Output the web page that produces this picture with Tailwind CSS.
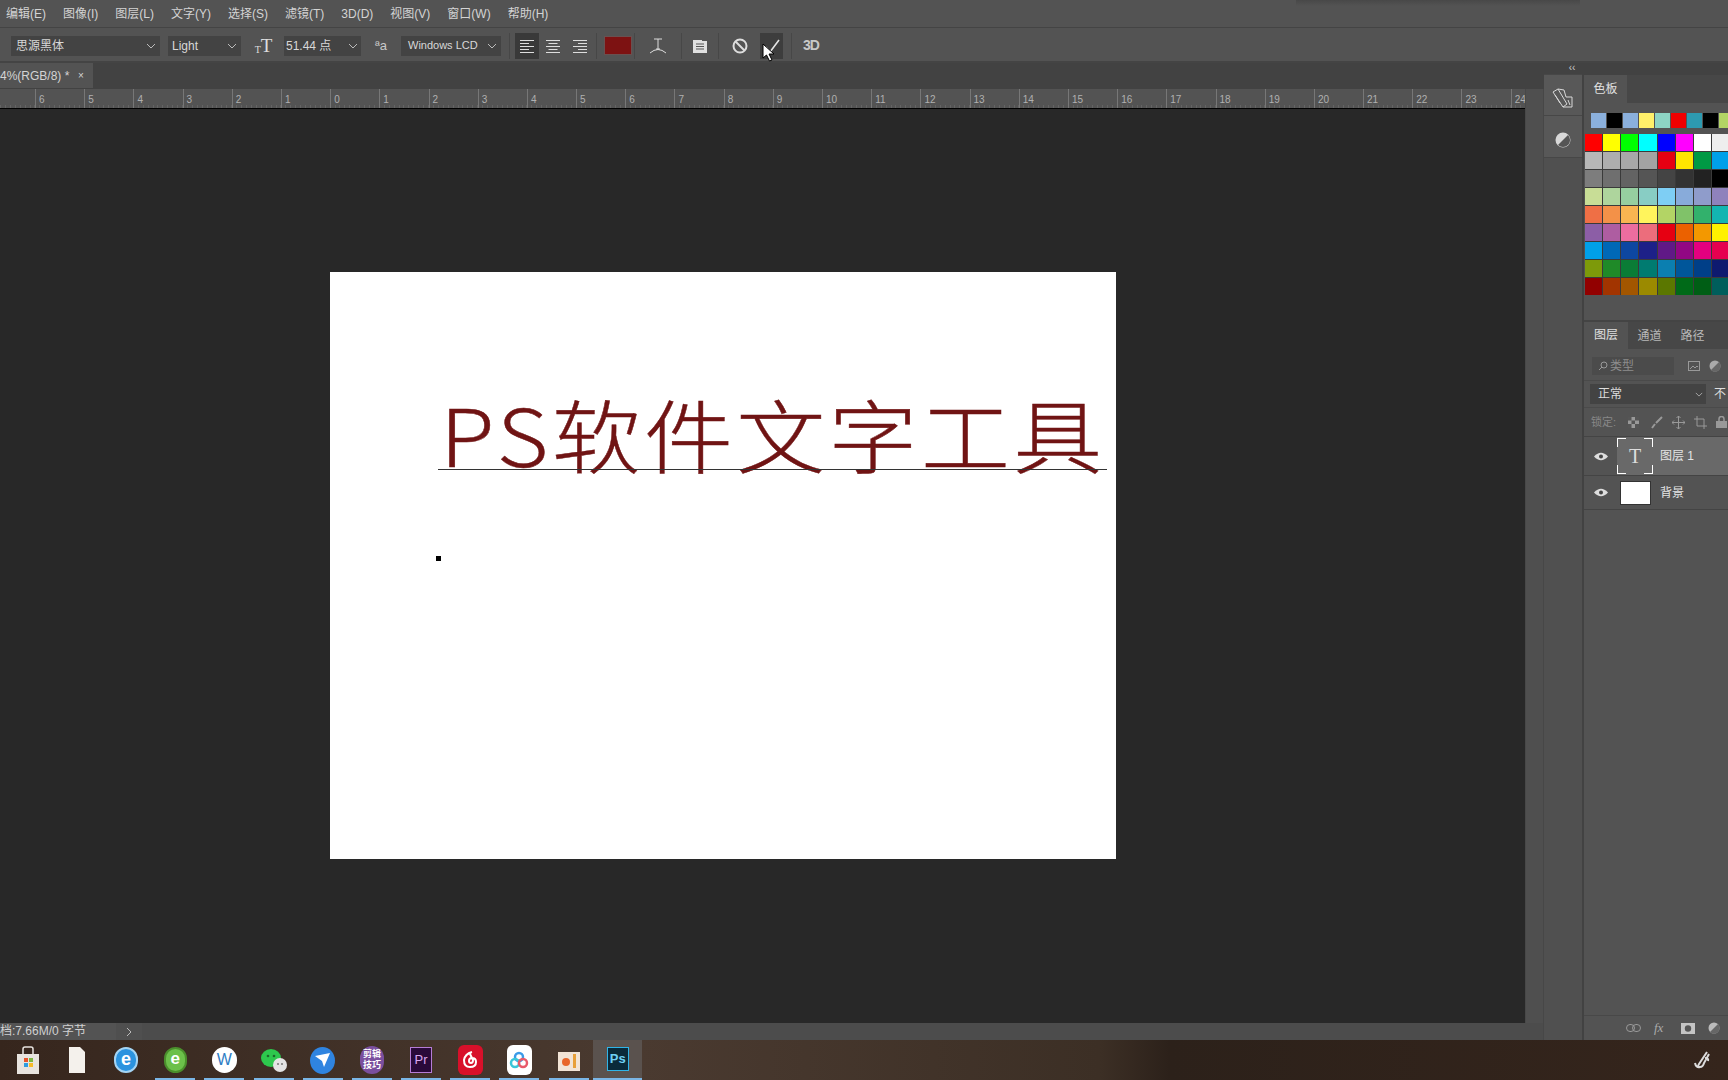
<!DOCTYPE html>
<html lang="zh">
<head>
    <meta charset="UTF-8">
    <title>Photoshop</title>
    <script src="https://cdn.jsdelivr.net/npm/@tailwindcss/browser@4"></script>
</head>
<body class="relative w-[1728px] h-[1080px] overflow-hidden flex flex-col bg-[#282828] text-[#d8d8d8] font-['Liberation_Sans','Noto_Sans_CJK_SC',sans-serif]">

    <!-- menu bar -->
    <div class="h-[28px] shrink-0 bg-[#535353] border-b border-[#444] flex items-center pl-[6px] gap-[17px] text-[12px] text-[#d4d4d4]">
        <span>编辑(E)</span><span>图像(I)</span><span>图层(L)</span><span>文字(Y)</span><span>选择(S)</span><span>滤镜(T)</span><span>3D(D)</span><span>视图(V)</span><span>窗口(W)</span><span>帮助(H)</span>
    </div>

    <!-- options bar -->
    <div class="h-[35px] shrink-0 bg-[#535353] border-b-2 border-[#444] flex items-center pt-[2px] pl-[11px] text-[12px]">
        <div class="w-[149px] h-[20px] bg-[#434343] flex items-center justify-between pl-[5px] pr-[4px]"><span>思源黑体</span><svg class="w-[10px] h-[6px]" viewBox="0 0 10 6" fill="none" stroke="#bbb"><path d="M1 1l4 4 4-4"/></svg></div>
        <div class="w-[73px] h-[20px] ml-[8px] bg-[#434343] flex items-center justify-between pl-[4px] pr-[4px]"><span>Light</span><svg class="w-[10px] h-[6px]" viewBox="0 0 10 6" fill="none" stroke="#bbb"><path d="M1 1l4 4 4-4"/></svg></div>
        <div class="w-[43px] pl-[2px] flex justify-center font-['Liberation_Serif',serif] text-[#ddd] leading-none"><span class="text-[10px] self-end">T</span><span class="text-[19px]">T</span></div>
        <div class="w-[77px] h-[20px] bg-[#434343] flex items-center justify-between pl-[2px] pr-[3px]"><span>51.44 点</span><svg class="w-[10px] h-[6px]" viewBox="0 0 10 6" fill="none" stroke="#bbb"><path d="M1 1l4 4 4-4"/></svg></div>
        <div class="w-[40px] text-center text-[13px] text-[#c8c8c8]">ªa</div>
        <div class="w-[100px] h-[20px] bg-[#434343] flex items-center justify-between pl-[7px] pr-[4px] text-[11px]"><span>Windows LCD</span><svg class="w-[10px] h-[6px]" viewBox="0 0 10 6" fill="none" stroke="#bbb"><path d="M1 1l4 4 4-4"/></svg></div>
        <div class="w-px h-[26px] bg-[#474747] ml-[8px] mr-[5px]"></div>
        <div class="w-[24px] h-[26px] bg-[#393939] flex items-center justify-center">
            <svg class="w-[14px] h-[14px]" viewBox="0 0 14 14" stroke="#ddd"><path d="M0 1.5h14M0 4.5h9M0 7.5h14M0 10.5h9M0 13.5h14"/></svg>
        </div>
        <div class="w-[28px] flex justify-center">
            <svg class="w-[14px] h-[14px]" viewBox="0 0 14 14" stroke="#ddd"><path d="M0 1.5h14M2.5 4.5h9M0 7.5h14M2.5 10.5h9M0 13.5h14"/></svg>
        </div>
        <div class="w-[26px] flex justify-center">
            <svg class="w-[14px] h-[14px]" viewBox="0 0 14 14" stroke="#ddd"><path d="M0 1.5h14M5 4.5h9M0 7.5h14M5 10.5h9M0 13.5h14"/></svg>
        </div>
        <div class="w-px h-[26px] bg-[#474747] ml-[3px] mr-[7px]"></div>
        <div class="w-[28px] h-[19px] bg-[#7d1212] border border-[#6a5050]"></div>
        <div class="w-px h-[26px] bg-[#474747] ml-[2px]"></div>
        <div class="w-[46px] flex justify-center">
            <svg class="w-[18px] h-[18px]" viewBox="0 0 18 18" fill="none" stroke="#ddd"><path d="M5 2h8M9 2v10M7 12h4M1 16q8-7 16 0"/></svg>
        </div>
        <div class="w-px h-[26px] bg-[#474747]"></div>
        <div class="w-[36px] flex justify-center">
            <svg class="w-[16px] h-[16px]" viewBox="0 0 16 16"><path d="M1 2h9v1h5v12H1z" fill="#e0e0e0"/><path d="M4 6h8M4 8.5h8M4 11h8" stroke="#555"/></svg>
        </div>
        <div class="w-px h-[26px] bg-[#474747]"></div>
        <div class="w-[41px] flex justify-center">
            <svg class="w-[16px] h-[16px]" viewBox="0 0 16 16" fill="none" stroke="#ddd" stroke-width="2"><circle cx="8" cy="8" r="6.5"/><path d="M3.5 3.5l9 9"/></svg>
        </div>
        <div class="w-[23px] h-[26px] bg-[#3d3d3d] flex items-center justify-center">
            <svg class="w-[16px] h-[14px]" viewBox="0 0 16 14" fill="none" stroke="#e4e4e4" stroke-width="1.6"><path d="M2 8l4 5L15 1"/></svg>
        </div>
        <div class="w-px h-[26px] bg-[#474747] ml-[8px]"></div>
        <div class="w-[38px] text-center text-[14px] font-bold text-[#c8c8c8] tracking-[-1px]">3D</div>
    </div>

    <!-- tab bar -->
    <div class="h-[26px] shrink-0 bg-[#424242] flex">
        <div class="w-[93px] h-[25px] bg-[#535353] flex items-center gap-[6px] text-[12px] text-[#d4d4d4]"><span class="w-[72px] whitespace-nowrap">4%(RGB/8) *</span><span class="text-[10px]">×</span></div>
    </div>

    <div class="flex flex-1 min-h-0">
        <!-- document area -->
        <div class="w-[1543px] shrink-0 flex flex-col">
            <div class="flex flex-1 min-h-0">
                <div class="w-[1525px] shrink-0 flex flex-col">
                    <!-- ruler -->
                    <div class="h-[20px] shrink-0 bg-[#535353] border-b border-black flex overflow-hidden pl-[35px] text-[10px] leading-[22px] text-[#b0b0b0] bg-[repeating-linear-gradient(90deg,#636363_0,#636363_1px,transparent_1px,transparent_4.92px)] bg-bottom bg-no-repeat bg-size-[100%_3px]">
                        <span class="w-[49.2px] shrink-0 pl-[3px] border-l border-[#777]">6</span><span class="w-[49.2px] shrink-0 pl-[3px] border-l border-[#777]">5</span><span class="w-[49.2px] shrink-0 pl-[3px] border-l border-[#777]">4</span><span class="w-[49.2px] shrink-0 pl-[3px] border-l border-[#777]">3</span><span class="w-[49.2px] shrink-0 pl-[3px] border-l border-[#777]">2</span><span class="w-[49.2px] shrink-0 pl-[3px] border-l border-[#777]">1</span><span class="w-[49.2px] shrink-0 pl-[3px] border-l border-[#777]">0</span><span class="w-[49.2px] shrink-0 pl-[3px] border-l border-[#777]">1</span><span class="w-[49.2px] shrink-0 pl-[3px] border-l border-[#777]">2</span><span class="w-[49.2px] shrink-0 pl-[3px] border-l border-[#777]">3</span><span class="w-[49.2px] shrink-0 pl-[3px] border-l border-[#777]">4</span><span class="w-[49.2px] shrink-0 pl-[3px] border-l border-[#777]">5</span><span class="w-[49.2px] shrink-0 pl-[3px] border-l border-[#777]">6</span><span class="w-[49.2px] shrink-0 pl-[3px] border-l border-[#777]">7</span><span class="w-[49.2px] shrink-0 pl-[3px] border-l border-[#777]">8</span><span class="w-[49.2px] shrink-0 pl-[3px] border-l border-[#777]">9</span><span class="w-[49.2px] shrink-0 pl-[3px] border-l border-[#777]">10</span><span class="w-[49.2px] shrink-0 pl-[3px] border-l border-[#777]">11</span><span class="w-[49.2px] shrink-0 pl-[3px] border-l border-[#777]">12</span><span class="w-[49.2px] shrink-0 pl-[3px] border-l border-[#777]">13</span><span class="w-[49.2px] shrink-0 pl-[3px] border-l border-[#777]">14</span><span class="w-[49.2px] shrink-0 pl-[3px] border-l border-[#777]">15</span><span class="w-[49.2px] shrink-0 pl-[3px] border-l border-[#777]">16</span><span class="w-[49.2px] shrink-0 pl-[3px] border-l border-[#777]">17</span><span class="w-[49.2px] shrink-0 pl-[3px] border-l border-[#777]">18</span><span class="w-[49.2px] shrink-0 pl-[3px] border-l border-[#777]">19</span><span class="w-[49.2px] shrink-0 pl-[3px] border-l border-[#777]">20</span><span class="w-[49.2px] shrink-0 pl-[3px] border-l border-[#777]">21</span><span class="w-[49.2px] shrink-0 pl-[3px] border-l border-[#777]">22</span><span class="w-[49.2px] shrink-0 pl-[3px] border-l border-[#777]">23</span><span class="w-[49.2px] shrink-0 pl-[3px] border-l border-[#777]">24</span>
                    </div>
                    <!-- canvas -->
                    <div class="flex-1 bg-[#282828] pl-[330px] pt-[163px]">
                        <div class="relative w-[786px] h-[587px] bg-white overflow-hidden">
                            <div class="absolute left-[110px] top-[95px] whitespace-nowrap text-[89px] leading-[124px] tracking-[3.3px] font-light text-[#701414] font-['Noto_Sans_CJK_SC','Noto_Sans',sans-serif] origin-[0_99px] scale-y-[0.89] [-webkit-text-stroke:0.5px_#701414]">PS软件文字工具</div>
                            <div class="absolute left-[108px] top-[197px] w-[669px] h-px bg-[#333]"></div>
                            <div class="absolute left-[106px] top-[284px] w-[5px] h-[5px] bg-black"></div>
                        </div>
                    </div>
                </div>
                <!-- vertical scrollbar -->
                <div class="w-[18px] shrink-0 bg-[#4f4f4f] border-l border-[#484848]"></div>
            </div>
            <!-- status bar -->
            <div class="h-[17px] shrink-0 bg-[#4c4c4c] flex items-center text-[12px] text-[#d0d0d0]">
                <div class="w-[116px] h-full bg-[#535353] leading-[17px] whitespace-nowrap">档:7.66M/0 字节</div>
                <div class="w-[26px] h-full bg-[#4f4f4f] flex items-center justify-center">
                    <svg class="w-[6px] h-[10px]" viewBox="0 0 6 10" fill="none" stroke="#bbb"><path d="M1 1l4 4-4 4"/></svg>
                </div>
            </div>
        </div>

        <!-- collapsed dock -->
        <div class="w-[41px] shrink-0 bg-[#505050] border-l border-[#474747] border-r-2 border-r-[#424242] relative">
            <div class="h-[12px] text-center text-[10px] leading-[12px] text-[#ccc] absolute left-[20px] top-[-27px] w-[16px]">‹‹</div>
            <div class="h-[42px] mt-[-15px] pt-[6px] bg-[#585858] border-y border-[#474747] flex items-center justify-center">
                <svg class="w-[22px] h-[22px]" viewBox="0 0 22 22" fill="none" stroke="#d8d8d8"><path d="M1 5l5-3 9 15-4 3zM6 2l6 1 2 7M14 10h6v10h-9M3 8l5 8M16 13l2 5"/></svg>
            </div>
            <div class="h-[42px] pt-[7px] bg-[#585858] border-b border-[#474747] flex items-center justify-center">
                <svg class="w-[16px] h-[16px]" viewBox="0 0 16 16"><circle cx="8" cy="8" r="7.5" fill="#d8d8d8"/><path d="M13 3a7 7 0 0 1-10 10z" fill="#555"/></svg>
            </div>
        </div>

        <!-- right panels -->
        <div class="flex-1 flex flex-col bg-[#535353] overflow-hidden -mt-[14px]">
            <!-- swatches -->
            <div class="h-[247px] shrink-0 bg-[#535353] border-b-2 border-[#444] flex flex-col">
                <div class="h-[28px] shrink-0 bg-[#474747] flex">
                    <div class="w-[43px] bg-[#535353] text-center text-[12px] leading-[28px] text-[#e0e0e0]">色板</div>
                </div>
                <div class="h-[15px] mt-[10px] ml-[7px] flex gap-px overflow-hidden shrink-0">
                    <div class="w-[15px] shrink-0 bg-[#8bb0dc]"></div><div class="w-[15px] shrink-0 bg-black"></div><div class="w-[15px] shrink-0 bg-[#8bb0dc]"></div><div class="w-[15px] shrink-0 bg-[#fff06a]"></div><div class="w-[15px] shrink-0 bg-[#8dd4c4]"></div><div class="w-[15px] shrink-0 bg-[#f00000]"></div><div class="w-[15px] shrink-0 bg-[#2d9ab0]"></div><div class="w-[15px] shrink-0 bg-black"></div><div class="w-[15px] shrink-0 bg-[#b3d465]"></div>
                </div>
                <div class="grid grid-cols-8 gap-px bg-[#3a3a3a] w-[144px] ml-px mt-[6px] shrink-0">
                    <div class="h-[17px] bg-[#ff0000]"></div><div class="h-[17px] bg-[#ffff00]"></div><div class="h-[17px] bg-[#00ff00]"></div><div class="h-[17px] bg-[#00ffff]"></div><div class="h-[17px] bg-[#0000ff]"></div><div class="h-[17px] bg-[#ff00ff]"></div><div class="h-[17px] bg-[#ffffff]"></div><div class="h-[17px] bg-[#eeeeee]"></div>
                    <div class="h-[17px] bg-[#b7b7b7]"></div><div class="h-[17px] bg-[#aeaeae]"></div><div class="h-[17px] bg-[#a8a8a8]"></div><div class="h-[17px] bg-[#a3a3a3]"></div><div class="h-[17px] bg-[#e60012]"></div><div class="h-[17px] bg-[#ffe500]"></div><div class="h-[17px] bg-[#009944]"></div><div class="h-[17px] bg-[#00a0e9]"></div>
                    <div class="h-[17px] bg-[#7d7d7d]"></div><div class="h-[17px] bg-[#6f6f6f]"></div><div class="h-[17px] bg-[#636363]"></div><div class="h-[17px] bg-[#555555]"></div><div class="h-[17px] bg-[#444444]"></div><div class="h-[17px] bg-[#333333]"></div><div class="h-[17px] bg-[#222222]"></div><div class="h-[17px] bg-[#000000]"></div>
                    <div class="h-[17px] bg-[#c8dd96]"></div><div class="h-[17px] bg-[#aed59d]"></div><div class="h-[17px] bg-[#96cfa0]"></div><div class="h-[17px] bg-[#88cdc4]"></div><div class="h-[17px] bg-[#7ecef4]"></div><div class="h-[17px] bg-[#88abda]"></div><div class="h-[17px] bg-[#8f9ccb]"></div><div class="h-[17px] bg-[#8f82bc]"></div>
                    <div class="h-[17px] bg-[#ef6f45]"></div><div class="h-[17px] bg-[#f39148]"></div><div class="h-[17px] bg-[#f8b551]"></div><div class="h-[17px] bg-[#fff45c]"></div><div class="h-[17px] bg-[#b3d465]"></div><div class="h-[17px] bg-[#80c269]"></div><div class="h-[17px] bg-[#32b16c]"></div><div class="h-[17px] bg-[#13b5b1]"></div>
                    <div class="h-[17px] bg-[#8c5ea6]"></div><div class="h-[17px] bg-[#ae5da1]"></div><div class="h-[17px] bg-[#ec6d9f]"></div><div class="h-[17px] bg-[#ec6d7c]"></div><div class="h-[17px] bg-[#e60012]"></div><div class="h-[17px] bg-[#eb6100]"></div><div class="h-[17px] bg-[#f39800]"></div><div class="h-[17px] bg-[#fff100]"></div>
                    <div class="h-[17px] bg-[#00a0e9]"></div><div class="h-[17px] bg-[#0068b7]"></div><div class="h-[17px] bg-[#0d47a1]"></div><div class="h-[17px] bg-[#1d2088]"></div><div class="h-[17px] bg-[#601986]"></div><div class="h-[17px] bg-[#920783]"></div><div class="h-[17px] bg-[#e4007f]"></div><div class="h-[17px] bg-[#e5004f]"></div>
                    <div class="h-[17px] bg-[#7d9a0a]"></div><div class="h-[17px] bg-[#1f8a28]"></div><div class="h-[17px] bg-[#0a7c36]"></div><div class="h-[17px] bg-[#007b70]"></div><div class="h-[17px] bg-[#0b7fb0]"></div><div class="h-[17px] bg-[#00569a]"></div><div class="h-[17px] bg-[#003f88]"></div><div class="h-[17px] bg-[#0e1a6f]"></div>
                    <div class="h-[17px] bg-[#920000]"></div><div class="h-[17px] bg-[#a23400]"></div><div class="h-[17px] bg-[#a25600]"></div><div class="h-[17px] bg-[#9b8a00]"></div><div class="h-[17px] bg-[#5b7700]"></div><div class="h-[17px] bg-[#006a18]"></div><div class="h-[17px] bg-[#005e15]"></div><div class="h-[17px] bg-[#005e5b]"></div>
                </div>
            </div>
            <!-- layers -->
            <div class="flex-1 flex flex-col text-[12px]">
                <div class="h-[27px] shrink-0 bg-[#474747] flex items-center text-[#b8b8b8]">
                    <div class="w-[44px] h-full bg-[#535353] text-center leading-[27px] text-[#e0e0e0]">图层</div>
                    <div class="w-[43px] text-center">通道</div>
                    <div class="w-[43px] text-center">路径</div>
                </div>
                <div class="h-[32px] pt-[3px] shrink-0 flex items-center pl-[8px] border-b border-[#4a4a4a]">
                    <div class="w-[82px] h-[18px] bg-[#4b4b4b] flex items-center gap-[2px] pl-[6px] text-[#8d8d8d]">
                        <svg class="w-[10px] h-[10px]" viewBox="0 0 10 10" fill="none" stroke="#999"><circle cx="6" cy="4" r="3"/><path d="M4 6L1 9"/></svg><span>类型</span>
                    </div>
                    <svg class="w-[12px] h-[10px] ml-[14px]" viewBox="0 0 12 10" fill="none" stroke="#999"><rect x=".5" y=".5" width="11" height="9"/><path d="M2 8l3-3 2 2 2-2 1 1"/></svg>
                    <svg class="w-[12px] h-[12px] ml-[9px]" viewBox="0 0 12 12"><circle cx="6" cy="6" r="5.5" fill="#aaa"/><path d="M10 2a5.5 5.5 0 0 1-8 8z" fill="#666"/></svg>
                </div>
                <div class="h-[27px] shrink-0 flex items-center pl-[6px] border-b border-[#4a4a4a] gap-[8px]">
                    <div class="w-[116px] shrink-0 h-[20px] bg-[#434343] flex items-center justify-between pl-[8px] pr-[3px] text-[#ddd]"><span>正常</span><svg class="w-[8px] h-[5px]" viewBox="0 0 10 6" fill="none" stroke="#bbb"><path d="M1 1l4 4 4-4"/></svg></div>
                    <span class="text-[#ddd]">不</span>
                </div>
                <div class="h-[29px] shrink-0 flex items-center pl-[7px] text-[11px] text-[#888] border-b border-[#444]">
                    <span class="w-[37px]">锁定:</span>
                    <svg class="w-[11px] h-[11px]" viewBox="0 0 11 11"><rect width="11" height="11" fill="#999"/><path d="M0 0h3.5v3.5H0zM7 0h4v3.5H7zM3.5 3.5H7V7H3.5zM0 7h3.5v4H0zM7 7h4v4H7z" fill="#555"/></svg>
                    <svg class="w-[13px] h-[13px] ml-[11px]" viewBox="0 0 13 13" fill="none" stroke="#999" stroke-width="2"><path d="M12 1L6 7M5 8l-3 4"/></svg>
                    <svg class="w-[13px] h-[13px] ml-[9px]" viewBox="0 0 13 13" fill="none" stroke="#999"><path d="M6.5 0v13M0 6.5h13M4.5 2l2-2 2 2M4.5 11l2 2 2-2M2 4.5l-2 2 2 2M11 4.5l2 2-2 2"/></svg>
                    <svg class="w-[13px] h-[13px] ml-[9px]" viewBox="0 0 13 13" fill="none" stroke="#999"><path d="M3 0v10h10M0 3h10v10"/></svg>
                    <svg class="w-[11px] h-[12px] ml-[9px]" viewBox="0 0 11 12"><path d="M3 5V3a2.5 2.5 0 0 1 5 0v2" fill="none" stroke="#999" stroke-width="1.5"/><rect y="5" width="11" height="7" fill="#999"/></svg>
                </div>
                <div class="h-[39px] shrink-0 flex border-b border-[#444]">
                    <div class="w-[33px] flex items-center justify-center bg-[#535353]">
                        <svg class="w-[14px] h-[9px]" viewBox="0 0 14 9"><path d="M0 4.5Q7-3 14 4.5 7 12 0 4.5z" fill="#ddd"/><circle cx="7" cy="4.5" r="2" fill="#444"/></svg>
                    </div>
                    <div class="flex-1 bg-[#696969] flex items-center text-[#e4e4e4]">
                        <div class="relative w-[36px] h-[36px] flex items-center justify-center font-['Liberation_Serif',serif] text-[20px] text-[#ddd]">
                            T
                            <span class="absolute left-0 top-0 w-[9px] h-[9px] border-l border-t border-white"></span><span class="absolute right-0 top-0 w-[9px] h-[9px] border-r border-t border-white"></span><span class="absolute left-0 bottom-0 w-[9px] h-[9px] border-l border-b border-white"></span><span class="absolute right-0 bottom-0 w-[9px] h-[9px] border-r border-b border-white"></span>
                        </div>
                        <span class="ml-[7px] text-[12px]">图层 1</span>
                    </div>
                </div>
                <div class="h-[34px] shrink-0 flex border-b border-[#444]">
                    <div class="w-[33px] flex items-center justify-center">
                        <svg class="w-[14px] h-[9px]" viewBox="0 0 14 9"><path d="M0 4.5Q7-3 14 4.5 7 12 0 4.5z" fill="#ddd"/><circle cx="7" cy="4.5" r="2" fill="#444"/></svg>
                    </div>
                    <div class="flex-1 flex items-center text-[#e4e4e4]">
                        <div class="ml-[3px] w-[31px] h-[24px] bg-white border border-[#333]"></div>
                        <span class="ml-[9px]">背景</span>
                    </div>
                </div>
                <div class="flex-1"></div>
                <div class="h-[25px] shrink-0 border-t border-[#484848] flex items-center pl-[42px] gap-[13px]">
                    <svg class="w-[15px] h-[8px]" viewBox="0 0 15 8" fill="none" stroke="#999"><rect x=".5" y=".5" width="8" height="7" rx="3.5"/><rect x="6.5" y=".5" width="8" height="7" rx="3.5"/></svg>
                    <span class="font-['Liberation_Serif',serif] italic text-[13px] text-[#aaa] w-[14px]">fx</span>
                    <svg class="w-[14px] h-[11px]" viewBox="0 0 14 11"><rect width="14" height="11" fill="#c4c4c4"/><circle cx="7" cy="5.5" r="3.2" fill="#555"/></svg>
                    <svg class="w-[12px] h-[12px]" viewBox="0 0 12 12"><circle cx="6" cy="6" r="5.5" fill="#bbb"/><path d="M10 2a5.5 5.5 0 0 1-8 8z" fill="#666"/></svg>
                </div>
            </div>
        </div>
    </div>

    <!-- taskbar -->
    <div class="h-[40px] shrink-0 flex pl-[3px] bg-[linear-gradient(90deg,#36261d_0,#4a3a30_640px,#3c2f25_1100px,#2c211a_1170px,#35251c_100%)]">
        <div class="w-[49.2px] h-full flex items-center justify-center"><svg class="w-[24px] h-[28px]" viewBox="0 0 24 28"><path d="M1 8h22v20H1z" fill="#e8e4df"/><path d="M7 8V3q0-2 2-2h6q2 0 2 2v5" fill="none" stroke="#e8e4df" stroke-width="1.5"/><path d="M8 12h4v4H8z" fill="#e8542b"/><path d="M13 12h4v4h-4z" fill="#7cb742"/><path d="M8 17h4v4H8z" fill="#2e9ce0"/><path d="M13 17h4v4h-4z" fill="#f6bb2a"/></svg></div>
        <div class="w-[49.2px] h-full flex items-center justify-center"><svg class="w-[16px] h-[26px]" viewBox="0 0 16 26"><path d="M0 0h11l5 5v21H0z" fill="#f4f1ec"/></svg></div>
        <div class="w-[49.2px] h-full flex items-center justify-center"><div class="w-[24px] h-[26px] rounded-full bg-[#2b93df] border-2 border-[#a4d4f4] text-white font-bold text-[18px] leading-[20px] text-center">e</div></div>
        <div class="w-[49.2px] h-full flex items-center justify-center bg-[linear-gradient(#7ab6e6,#7ab6e6)] bg-bottom bg-no-repeat bg-size-[40px_2px]"><div class="w-[23px] h-[26px] rounded-full bg-[#6cc04a] border-2 border-[#4a8f2c] text-white font-bold text-[17px] leading-[20px] text-center">e</div></div>
        <div class="w-[49.2px] h-full flex items-center justify-center bg-[linear-gradient(#7ab6e6,#7ab6e6)] bg-bottom bg-no-repeat bg-size-[40px_2px]"><div class="w-[25px] h-[26px] rounded-full bg-white text-[#2f7dc4] text-[16px] leading-[26px] text-center">W</div></div>
        <div class="w-[49.2px] h-full flex items-center justify-center bg-[linear-gradient(#7ab6e6,#7ab6e6)] bg-bottom bg-no-repeat bg-size-[40px_2px]"><svg class="w-[26px] h-[26px]" viewBox="0 0 26 26"><ellipse cx="10" cy="11" rx="10" ry="9" fill="#2dc84d"/><circle cx="19" cy="18" r="7" fill="#e4e4e4"/><circle cx="7" cy="9" r="1.3" fill="#1a6a2a"/><circle cx="13" cy="9" r="1.3" fill="#1a6a2a"/><circle cx="17" cy="17" r="1" fill="#777"/><circle cx="21" cy="17" r="1" fill="#777"/></svg></div>
        <div class="w-[49.2px] h-full flex items-center justify-center bg-[linear-gradient(#7ab6e6,#7ab6e6)] bg-bottom bg-no-repeat bg-size-[40px_2px]"><svg class="w-[25px] h-[27px]" viewBox="0 0 25 27"><ellipse cx="12.5" cy="13.5" rx="12.5" ry="13.5" fill="#2f84e0"/><path d="M5 9l15-3-6 14-2-6z" fill="#fff"/></svg></div>
        <div class="w-[49.2px] h-full flex items-center justify-center bg-[linear-gradient(#7ab6e6,#7ab6e6)] bg-bottom bg-no-repeat bg-size-[40px_2px]"><div class="w-[24px] h-[28px] rounded-full bg-[#7a4f9e] text-white text-[9px] leading-[11px] text-center pt-[3px] font-bold">剪辑<br>技巧</div></div>
        <div class="w-[49.2px] h-full flex items-center justify-center bg-[linear-gradient(#7ab6e6,#7ab6e6)] bg-bottom bg-no-repeat bg-size-[40px_2px]"><div class="w-[22px] h-[26px] bg-[#2a0a3a] border border-[#b57cd6] text-[#d9a6f0] text-[13px] leading-[24px] text-center">Pr</div></div>
        <div class="w-[49.2px] h-full flex items-center justify-center bg-[linear-gradient(#7ab6e6,#7ab6e6)] bg-bottom bg-no-repeat bg-size-[40px_2px]"><div class="w-[25px] h-[30px] rounded-[6px] bg-[#d8102a] flex items-center justify-center"><svg class="w-[16px] h-[18px]" viewBox="0 0 16 18" fill="none" stroke="#fff" stroke-width="2"><path d="M10 1Q3 3 2 9q0 7 6 7 6 0 6-5 0-4-4-4-3 0-3 3 0 2 2 2t2-3L8 3"/></svg></div></div>
        <div class="w-[49.2px] h-full flex items-center justify-center bg-[linear-gradient(#7ab6e6,#7ab6e6)] bg-bottom bg-no-repeat bg-size-[40px_2px]"><div class="w-[25px] h-[30px] rounded-[6px] bg-white flex items-center justify-center"><svg class="w-[20px] h-[18px]" viewBox="0 0 20 18" fill="none" stroke-width="2.5"><circle cx="10" cy="6" r="4" stroke="#3b9be8"/><circle cx="6" cy="12" r="4" stroke="#3ac6d8"/><circle cx="14" cy="12" r="4" stroke="#e85a6a"/></svg></div></div>
        <div class="w-[49.2px] h-full flex items-center justify-center bg-[linear-gradient(#7ab6e6,#7ab6e6)] bg-bottom bg-no-repeat bg-size-[40px_2px]"><svg class="w-[22px] h-[22px]" viewBox="0 0 22 22"><path d="M0 3h22v19H0z" fill="#f2e4d6"/><circle cx="8" cy="13" r="4" fill="#e8662a"/><path d="M15 5h3v14h-3z" fill="#e8a03a"/></svg></div>
        <div class="w-[49px] h-full bg-[#5a524e] flex items-center justify-center border-b-2 border-[#7ab6e6]"><div class="w-[22px] h-[24px] bg-[#0a2a3a] border border-[#2fb4e8] text-[#6fd0f4] text-[13px] font-bold leading-[22px] text-center">Ps</div></div>
        <div class="flex-1 flex justify-end items-center">
            <svg class="w-[18px] h-[20px] mr-[17px]" viewBox="0 0 18 20" fill="none" stroke="#ddd" stroke-width="2"><path d="M14 2L6 14q-2 3 1 3t4-4l5-9M2 13q1 5 5 4M12 8q4 0 3 3"/></svg>
        </div>
    </div>

    <!-- top edge shadow from the window above -->
    <div class="absolute left-[1296px] top-0 w-[284px] h-[6px] bg-linear-to-b from-[#484848] to-[#535353]"></div>
    <!-- mouse pointer -->
    <svg class="absolute left-[762px] top-[43px] w-[13px] h-[19px]" viewBox="0 0 13 19"><path d="M1 1v14l3.5-3 3 6 2.5-1-3-6h5z" fill="#fff" stroke="#000"/></svg>
</body>
</html>
